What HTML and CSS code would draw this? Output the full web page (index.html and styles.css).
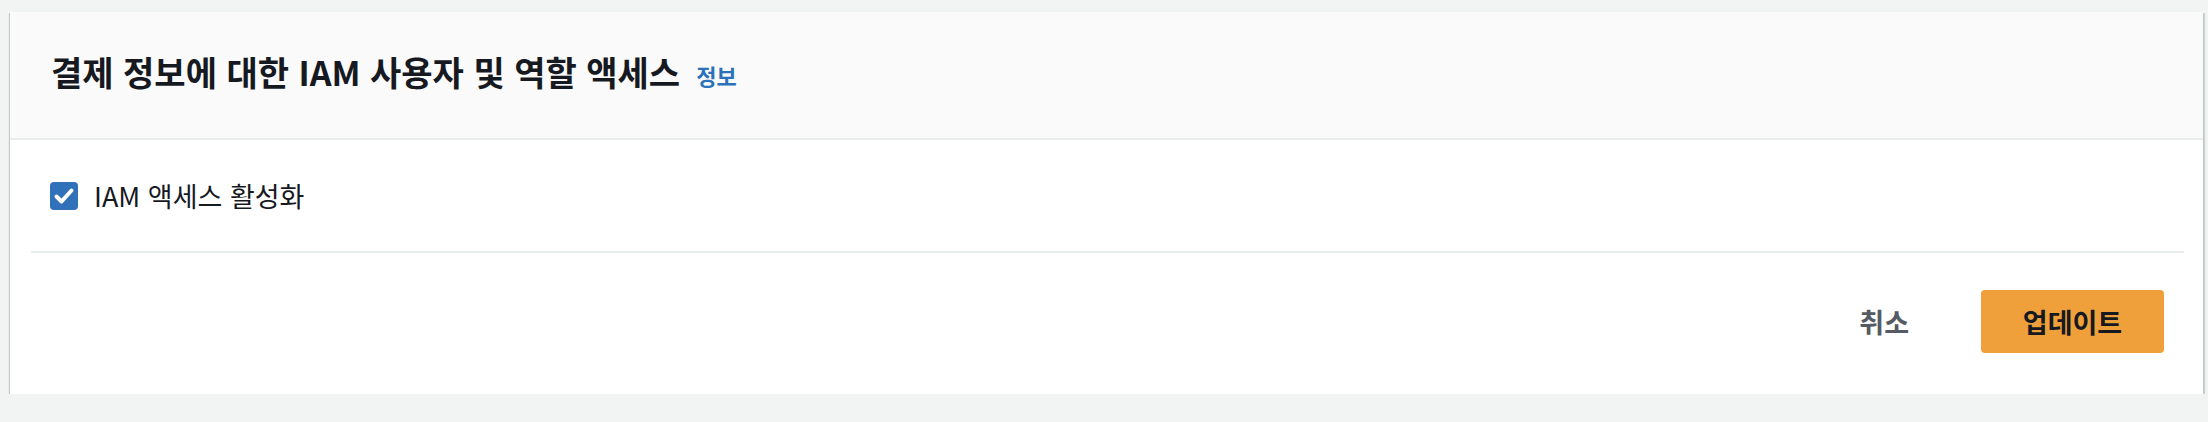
FILE: index.html
```html
<!DOCTYPE html>
<html lang="ko">
<head>
<meta charset="utf-8">
<link rel="stylesheet" href="styles.css">
</head>
<body>
  <section class="card">
    <header class="card-header">
      <h2 class="title">결제 정보에 대한 IAM 사용자 및 역할 액세스</h2>
      <a class="info" href="#">정보</a>
    </header>
    <div class="card-body">
      <label class="check-row">
        <span class="checkbox">
          <svg viewBox="0 0 28 28" width="28" height="28"><polyline points="6.5,14.5 11.5,19.5 21.5,8.5" fill="none" stroke="#ffffff" stroke-width="4" stroke-linecap="round" stroke-linejoin="round"/></svg>
        </span>
        <span class="check-label">IAM 액세스 활성화</span>
      </label>
      <div class="divider"></div>
      <div class="footer">
        <button class="btn-link" type="button">취소</button>
        <button class="btn-primary" type="button">업데이트</button>
      </div>
    </div>
  </section>
</body>
</html>
```

FILE: styles.css
```css
html, body {
  margin: 0;
  padding: 0;
}
body {
  background: #f2f3f3;
  padding: 12px 5px 0 10px;
  font-family: "Noto Sans CJK KR", "Noto Sans", sans-serif;
  color: #16191f;
}
.card {
  background: #ffffff;
  box-shadow: 0 2px 1px 0 rgba(0, 28, 36, 0.35), 2px 1px 1px 0 rgba(0, 28, 36, 0.15), -1px 1px 1px 0 rgba(0, 28, 36, 0.15);
}
.card-header {
  background: #fafafa;
  height: 120px;
  border-bottom: 2px solid #eaeded;
  display: flex;
  align-items: center;
  padding: 0 41px 6px;
}
.title {
  margin: 0;
  font-size: 34px;
  font-weight: 700;
  color: #16191f;
  line-height: 1;
}
.info {
  margin-left: 16px;
  font-size: 22px;
  font-weight: 700;
  color: #2a72b9;
  text-decoration: none;
  line-height: 1;
  padding-top: 6px;
}
.card-body {
  padding: 0 19px 0 21px;
}
.check-row {
  height: 111px;
  display: flex;
  align-items: center;
  padding-left: 19px;
}
.checkbox {
  width: 28px;
  height: 28px;
  border-radius: 4px;
  background: #3071b9;
  display: flex;
  align-items: center;
  justify-content: center;
  margin-right: 16px;
}
.checkbox svg {
  display: block;
}
.check-label {
  font-size: 27px;
  font-weight: 400;
  color: #16191f;
}
.divider {
  border-top: 2px solid #eaeded;
}
.footer {
  display: flex;
  justify-content: flex-end;
  align-items: center;
  padding: 37px 20px 41px 0;
}
.btn-link {
  background: none;
  border: none;
  padding: 0;
  margin-right: 72px;
  font-family: inherit;
  font-size: 27px;
  font-weight: 700;
  color: #545b64;
}
.btn-primary {
  width: 183px;
  height: 63px;
  border: none;
  border-radius: 4px;
  background: #f0a03a;
  font-family: inherit;
  font-size: 27px;
  font-weight: 700;
  color: #16191f;
}
```
